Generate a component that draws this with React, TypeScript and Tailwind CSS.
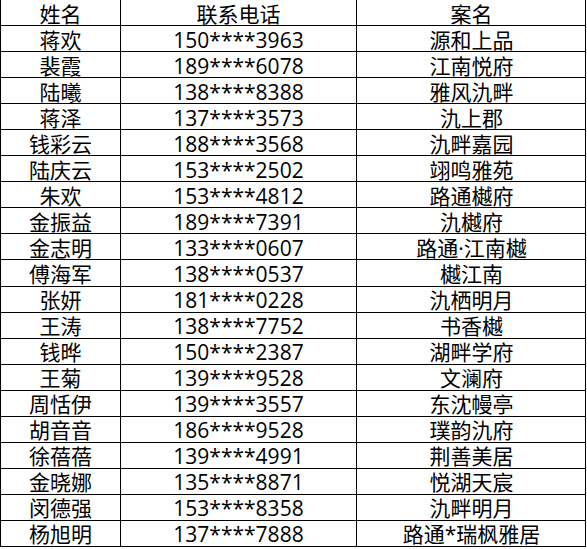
import React from 'react'

const rows: [string, string, string][] = [
  ['蒋欢', '150****3963', '源和上品'],
  ['裴霞', '189****6078', '江南悦府'],
  ['陆曦', '138****8388', '雅风氿畔'],
  ['蒋泽', '137****3573', '氿上郡'],
  ['钱彩云', '188****3568', '氿畔嘉园'],
  ['陆庆云', '153****2502', '翊鸣雅苑'],
  ['朱欢', '153****4812', '路通樾府'],
  ['金振益', '189****7391', '氿樾府'],
  ['金志明', '133****0607', '路通·江南樾'],
  ['傅海军', '138****0537', '樾江南'],
  ['张妍', '181****0228', '氿栖明月'],
  ['王涛', '138****7752', '书香樾'],
  ['钱晔', '150****2387', '湖畔学府'],
  ['王菊', '139****9528', '文澜府'],
  ['周恬伊', '139****3557', '东沈幔亭'],
  ['胡音音', '186****9528', '璞韵氿府'],
  ['徐蓓蓓', '139****4991', '荆善美居'],
  ['金晓娜', '135****8871', '悦湖天宸'],
  ['闵德强', '153****8358', '氿畔明月'],
  ['杨旭明', '137****7888', '路通*瑞枫雅居'],
]

const Row = ({ cells }: { cells: [string, string, string] }) => (
  <div className='grid grid-cols-[120px_236px_229px] h-[26.05px] border-b border-black'>
    <div className='flex items-center justify-center border-r border-black pt-[2px]'>{cells[0]}</div>
    <div className='flex items-center justify-center border-r border-black pt-[2px]'>{cells[1]}</div>
    <div className='flex items-center justify-center pt-[2px]'>{cells[2]}</div>
  </div>
)

const App = () => {
  return (
    <div className='w-[587px] h-[549px] bg-white'>
      <div
        className='w-[586px] border-l border-r border-black text-black text-[21px] leading-[22px]'
        style={{ fontFamily: '"Open Sans", "Noto Sans CJK SC", sans-serif' }}
      >
        <Row cells={['姓名', '联系电话', '案名']} />
        {rows.map((r, i) => (
          <Row key={i} cells={r} />
        ))}
      </div>
    </div>
  )
}

export default App
